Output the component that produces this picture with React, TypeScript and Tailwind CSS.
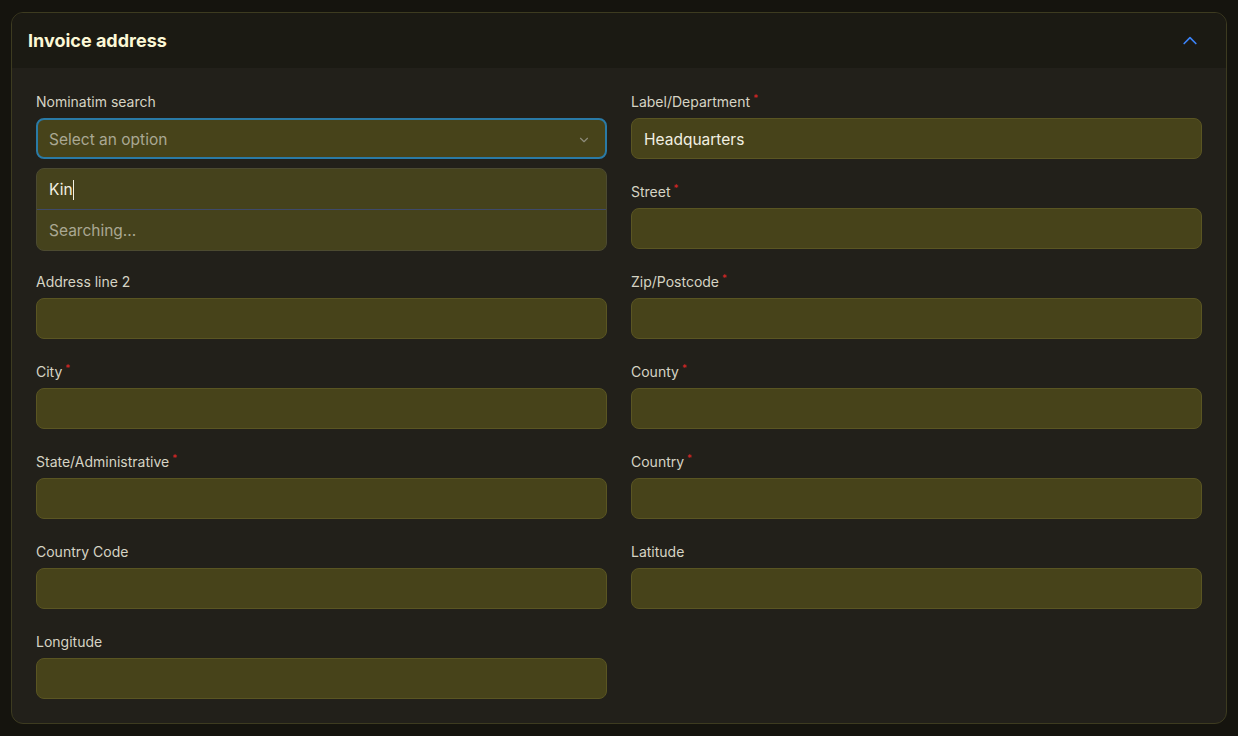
import React from "react";

const Req = () => <span className="ml-[3px] relative -top-[5px] text-[10px] text-[#dc2626]">*</span>;

function Field({ label, required, value }: { label: string; required?: boolean; value?: string }) {
  return (
    <div className="flex flex-col gap-[6px]">
      <div className="h-[20px] text-[14px] leading-[20px] text-[#d6d4c4]">
        {label}
        {required && <Req />}
      </div>
      <div className="h-[41px] rounded-lg border border-[#5a5522] bg-[#47431a] px-[12px] pt-[3px] flex items-center text-[15.5px] text-[#f2f0e2]">
        {value}
      </div>
    </div>
  );
}

export default function App() {
  return (
    <div className="min-h-[736px] w-full bg-[#15140e] pt-[12px] px-[11px] pb-[12px]" style={{ fontFamily: "Inter, 'Noto Sans', sans-serif" }}>
      <div className="rounded-xl border border-[#3d3b20] bg-[#22201a] overflow-hidden">
        <div className="h-[55px] bg-[#1b1a13] flex items-center justify-between pl-[16px] pr-[26px]">
          <h2 className="text-[18px] font-bold text-[#fcf8d6]">Invoice address</h2>
          <svg width="20" height="20" viewBox="0 0 24 24" fill="none" stroke="#3b82f6" strokeWidth="2" strokeLinecap="round" strokeLinejoin="round">
            <path d="M5 15l7-7 7 7" />
          </svg>
        </div>
        <div className="px-[24px] pt-[24px] pb-[24px] grid grid-cols-2 gap-x-[24px] gap-y-[23px]">
          <div className="flex flex-col gap-[6px] relative">
            <div className="h-[20px] text-[14px] leading-[20px] text-[#d6d4c4]">Nominatim search</div>
            <div className="h-[41px] rounded-lg border-2 border-[#2a7aa6] bg-[#47431a] pl-[11px] pr-[14px] pt-[3px] flex items-center justify-between text-[15.5px] text-[#aaa893]">
              <span>Select an option</span>
              <svg width="14" height="14" viewBox="0 0 24 24" fill="none" stroke="#8d8b7a" strokeWidth="2" strokeLinecap="round" strokeLinejoin="round">
                <path d="M6 9l6 6 6-6" />
              </svg>
            </div>
            <div className="absolute left-0 right-0 top-[76px] z-10 rounded-lg border border-[#4c4a30] bg-[#45421c] overflow-hidden">
              <div className="h-[41px] flex items-center px-[12px] pt-[2px] text-[15.5px] text-[#f2f0e2] border-b border-[#3e4a6a]">
                Kin<span className="inline-block w-[1px] h-[20px] bg-[#f2f0e2]" />
              </div>
              <div className="h-[40px] flex items-center px-[12px] pt-[2px] text-[15.5px] text-[#aaa893]">Searching...</div>
            </div>
          </div>
          <Field label="Label/Department" required value="Headquarters" />
          <div />
          <Field label="Street" required />
          <Field label="Address line 2" />
          <Field label="Zip/Postcode" required />
          <Field label="City" required />
          <Field label="County" required />
          <Field label="State/Administrative" required />
          <Field label="Country" required />
          <Field label="Country Code" />
          <Field label="Latitude" />
          <Field label="Longitude" />
        </div>
      </div>
    </div>
  );
}
